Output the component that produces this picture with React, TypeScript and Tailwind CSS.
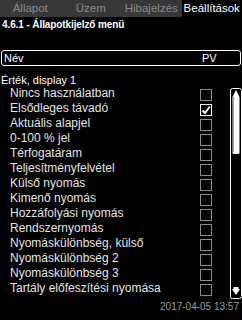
import React from 'react';

const tabs = [
  { label: 'Állapot', active: false },
  { label: 'Üzem', active: false },
  { label: 'Hibajelzés', active: false },
  { label: 'Beállítások', active: true },
];

const items = [
  { label: 'Nincs használatban', checked: false },
  { label: 'Elsődleges távadó', checked: true },
  { label: 'Aktuális alapjel', checked: false },
  { label: '0-100 % jel', checked: false },
  { label: 'Térfogatáram', checked: false },
  { label: 'Teljesítményfelvétel', checked: false },
  { label: 'Külső nyomás', checked: false },
  { label: 'Kimenő nyomás', checked: false },
  { label: 'Hozzáfolyási nyomás', checked: false },
  { label: 'Rendszernyomás', checked: false },
  { label: 'Nyomáskülönbség, külső', checked: false },
  { label: 'Nyomáskülönbség 2', checked: false },
  { label: 'Nyomáskülönbség 3', checked: false },
  { label: 'Tartály előfeszítési nyomása', checked: false },
];

function Checkbox({ checked }: { checked: boolean }) {
  return (
    <div
      className={
        checked
          ? 'mt-[2px] w-[12px] h-[12px] border border-white'
          : 'mt-[2px] w-[12px] h-[12px] border border-[#8c8c8c]'
      }
    >
      {checked && (
        <svg width="10" height="10" viewBox="0 0 10 10">
          <path d="M1.5 5.5 L4 8 L8.8 1.5" stroke="white" strokeWidth="2" fill="none" />
        </svg>
      )}
    </div>
  );
}

function Scrollbar() {
  return (
    <svg width="12" height="211" viewBox="0 0 12 211" className="mt-[1px]">
      <rect x="0.5" y="0.5" width="11" height="210" rx="2" stroke="white" fill="none" />
      <polygon points="6,2 9.5,9 2.5,9" fill="white" />
      <rect x="2.5" y="8" width="7" height="58" rx="1.5" fill="white" />
      <rect x="3" y="9" width="1" height="55" fill="#9a9a9a" />
      <rect x="3.5" y="199" width="5" height="2" fill="white" />
      <polygon points="2,201 10,201 6,207" fill="white" />
    </svg>
  );
}

export default function App() {
  return (
    <div
      className="w-[242px] h-[320px] bg-black text-white flex flex-col overflow-hidden"
      style={{ fontFamily: '"Liberation Sans", Arial, sans-serif' }}
    >
      <div className="grid grid-cols-4 h-[17px] bg-[#383838]">
        {tabs.map((t) => (
          <div
            key={t.label}
            className={
              t.active
                ? 'bg-black text-white text-[11.5px] leading-[17px] text-center whitespace-nowrap'
                : 'text-[#8a8a8a] text-[11.5px] leading-[17px] text-center whitespace-nowrap'
            }
          >
            {t.label}
          </div>
        ))}
      </div>

      <div className="mt-[1px] h-[13px] pl-[2px] text-[10px] leading-[13px] font-bold tracking-[-0.1px]">
        4.6.1 - Állapotkijelző menü
      </div>

      <div className="mt-[19px] ml-[1px] w-[240px] h-[16px] border border-white rounded-[3px] flex items-center text-[11px] leading-[13px]">
        <span className="pl-[2px] w-[200px]">Név</span>
        <span>PV</span>
      </div>

      <div className="mt-[8px] h-[13px] pl-[1px] text-[11px] leading-[13px]">Érték, display 1</div>

      <div className="flex">
        <div className="w-[230px] flex flex-col">
          {items.map((it) => (
            <div key={it.label} className="flex h-[15px] items-start">
              <span className="w-[200px] pl-[10px] text-[12px] leading-[13px] text-[#e4e4e4] whitespace-nowrap">
                {it.label}
              </span>
              <Checkbox checked={it.checked} />
            </div>
          ))}
        </div>
        <Scrollbar />
      </div>

      <div className="mt-[1px] h-[13px] pr-[3px] text-right text-[10px] leading-[13px] text-[#9a9a9a]">
        2017-04-05 13:57
      </div>
    </div>
  );
}
